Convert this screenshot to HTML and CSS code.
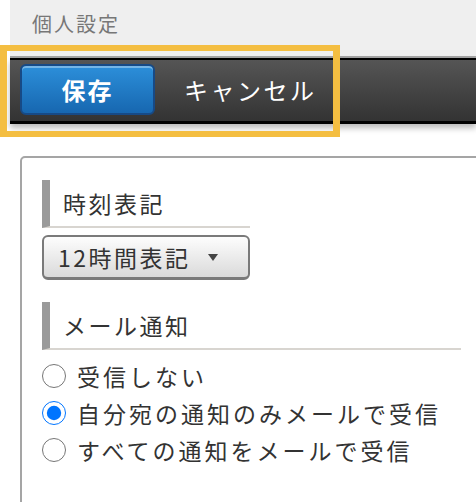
FILE: index.html
```html
<!DOCTYPE html>
<html lang="ja">

<head>
    <meta charset="UTF-8">
    <meta name="viewport" content="width=device-width, initial-scale=1.0">
    <title>個人設定</title>
    <link rel="stylesheet" href="styles.css">
</head>

<body>
    <div class="page">
        <div class="page-title">個人設定</div>

        <div class="toolbar">
            <button class="btn-save" type="button">保存</button>
            <button class="btn-cancel" type="button">キャンセル</button>
        </div>

        <div class="panel">
            <div class="section">
                <h2 class="section-title">時刻表記</h2>
                <div class="select">
                    <span>12時間表記</span>
                    <span class="arrow"></span>
                </div>
            </div>

            <div class="section">
                <h2 class="section-title">メール通知</h2>
                <ul class="radios">
                    <li><label><input type="radio" name="mail">受信しない</label></li>
                    <li><label><input type="radio" name="mail" checked>自分宛の通知のみメールで受信</label></li>
                    <li><label><input type="radio" name="mail">すべての通知をメールで受信</label></li>
                </ul>
            </div>
        </div>
    </div>

    <!-- 強調枠 -->
    <div class="highlight"></div>
</body>

</html>
```

FILE: styles.css
```css
* {
    margin: 0;
    padding: 0;
    box-sizing: border-box;
}

ul {
    list-style: none;
}

body {
    font-family: "Noto Sans CJK JP", "Liberation Sans", sans-serif;
    color: #333;
    background: #fff;
    overflow: hidden;
}

.page {
    margin-left: 10px;
}

.page-title {
    height: 58px;
    padding: 9px 0 0 22px;
    font-size: 20px;
    letter-spacing: 2px;
    color: #777;
    background: #efefef;
    border-bottom: 2px solid #a4a4a4;
}

.toolbar {
    display: flex;
    align-items: flex-start;
    height: 66px;
    padding: 4px 10px 0;
    background: linear-gradient(#555, #333);
    border-top: 2px solid #000;
    border-bottom: 3px solid #000;
    box-shadow: 0 4px 6px rgba(0, 0, 0, 0.28);
}

.toolbar button {
    font-family: inherit;
    font-size: 24px;
    color: #fff;
    cursor: pointer;
}

.btn-save {
    width: 135px;
    height: 51px;
    font-weight: bold;
    letter-spacing: 2px;
    background: linear-gradient(#2c8fda, #1767b0);
    border: 2px solid #174a86;
    border-radius: 6px;
    box-shadow: inset 0 2px 0 rgba(255, 255, 255, 0.35);
}

.btn-cancel {
    height: 51px;
    padding: 0 0 0 29px;
    letter-spacing: 2.5px;
    background: none;
    border: none;
}

.panel {
    width: 600px;
    height: 400px;
    margin: 32px 0 0 10px;
    padding: 22px 20px;
    border: 2px solid #a5a5a5;
    border-radius: 5px;
}

.section {
    width: fit-content;
    margin-bottom: 22px;
}

.section-title {
    height: 48px;
    padding-left: 13px;
    font-size: 23px;
    font-weight: normal;
    line-height: 46px;
    letter-spacing: 2.5px;
    color: #333;
    border-left: 8px solid #9a9a9a;
    border-bottom: 2px solid #d8d5d0;
}

.select {
    display: flex;
    align-items: center;
    width: 208px;
    height: 45px;
    margin-top: 7px;
    padding-left: 14px;
    font-size: 23px;
    letter-spacing: 2.5px;
    background: linear-gradient(#fdfdfd, #dadada);
    border: 2px solid #7a7a7a;
    border-bottom-width: 3px;
    border-radius: 6px;
}

.select .arrow {
    margin-left: 17px;
    border-top: 7px solid #444;
    border-left: 5px solid transparent;
    border-right: 5px solid transparent;
}

.radios {
    padding: 7px 20px 0 0;
}

.radios label {
    display: flex;
    align-items: center;
    height: 37px;
    font-size: 23px;
    letter-spacing: 3px;
}

.radios input {
    width: 24px;
    height: 24px;
    margin: 0 11px 0 0;
}

.highlight {
    position: absolute;
    left: 0;
    top: 45px;
    width: 340px;
    height: 92px;
    border: 6px solid #f4be41;
    border-left-width: 7px;
    border-right-width: 7px;
}
```
